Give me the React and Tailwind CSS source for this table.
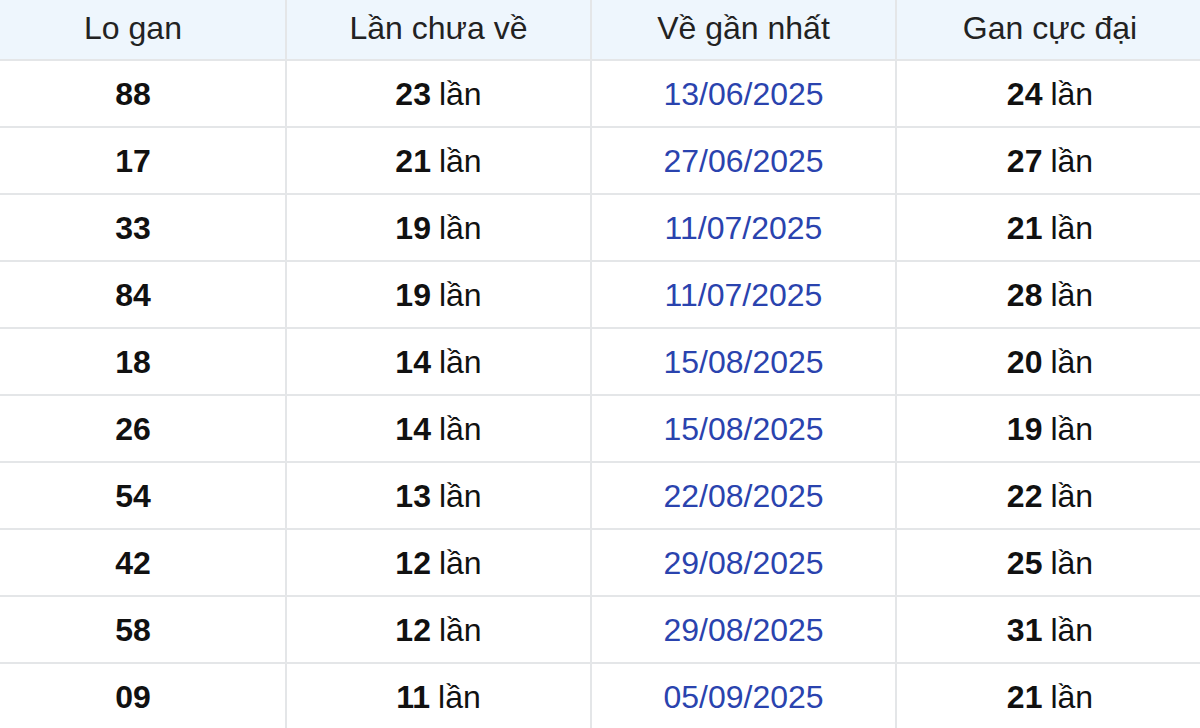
import React from "react";

const rows = [
    ["88", "23", "13/06/2025", "24"],
    ["17", "21", "27/06/2025", "27"],
    ["33", "19", "11/07/2025", "21"],
    ["84", "19", "11/07/2025", "28"],
    ["18", "14", "15/08/2025", "20"],
    ["26", "14", "15/08/2025", "19"],
    ["54", "13", "22/08/2025", "22"],
    ["42", "12", "29/08/2025", "25"],
    ["58", "12", "29/08/2025", "31"],
    ["09", "11", "05/09/2025", "21"],
];

// first column is partly cut off on the left edge of the shot
const cols = "grid grid-cols-[306px_305px_305px_306px] ml-[-19px]";

export default function App() {
    return (
        <section className="w-[1200px] h-[728px] overflow-hidden bg-white font-['Liberation_Sans',Arial,sans-serif] text-[32px]">
            {/* Header */}
            <div className={`${cols} h-[61px] bg-[#eef6fd] border-b-2 border-[#e4e6e8] text-[#222]`}>
                <div className="flex items-center justify-center border-r-2 border-[#e4e6e8] pb-1">Lo gan</div>
                <div className="flex items-center justify-center border-r-2 border-[#e4e6e8] pb-1">Lần chưa về</div>
                <div className="flex items-center justify-center border-r-2 border-[#e4e6e8] pb-1">Về gần nhất</div>
                <div className="flex items-center justify-center pb-1">Gan cực đại</div>
            </div>

            {/* Rows */}
            {rows.map((r, i) => (
                <div key={i} className={`${cols} h-[67px] border-b-2 border-[#e4e6e8] text-[#111]`}>
                    <div className="flex items-center justify-center border-r-2 border-[#e4e6e8] font-bold">{r[0]}</div>
                    <div className="flex items-center justify-center border-r-2 border-[#e4e6e8]">
                        <strong className="font-bold mr-2">{r[1]}</strong>lần
                    </div>
                    <div className="flex items-center justify-center border-r-2 border-[#e4e6e8] text-[#2a43ae]">{r[2]}</div>
                    <div className="flex items-center justify-center">
                        <strong className="font-bold mr-2">{r[3]}</strong>lần
                    </div>
                </div>
            ))}
        </section>
    );
}
